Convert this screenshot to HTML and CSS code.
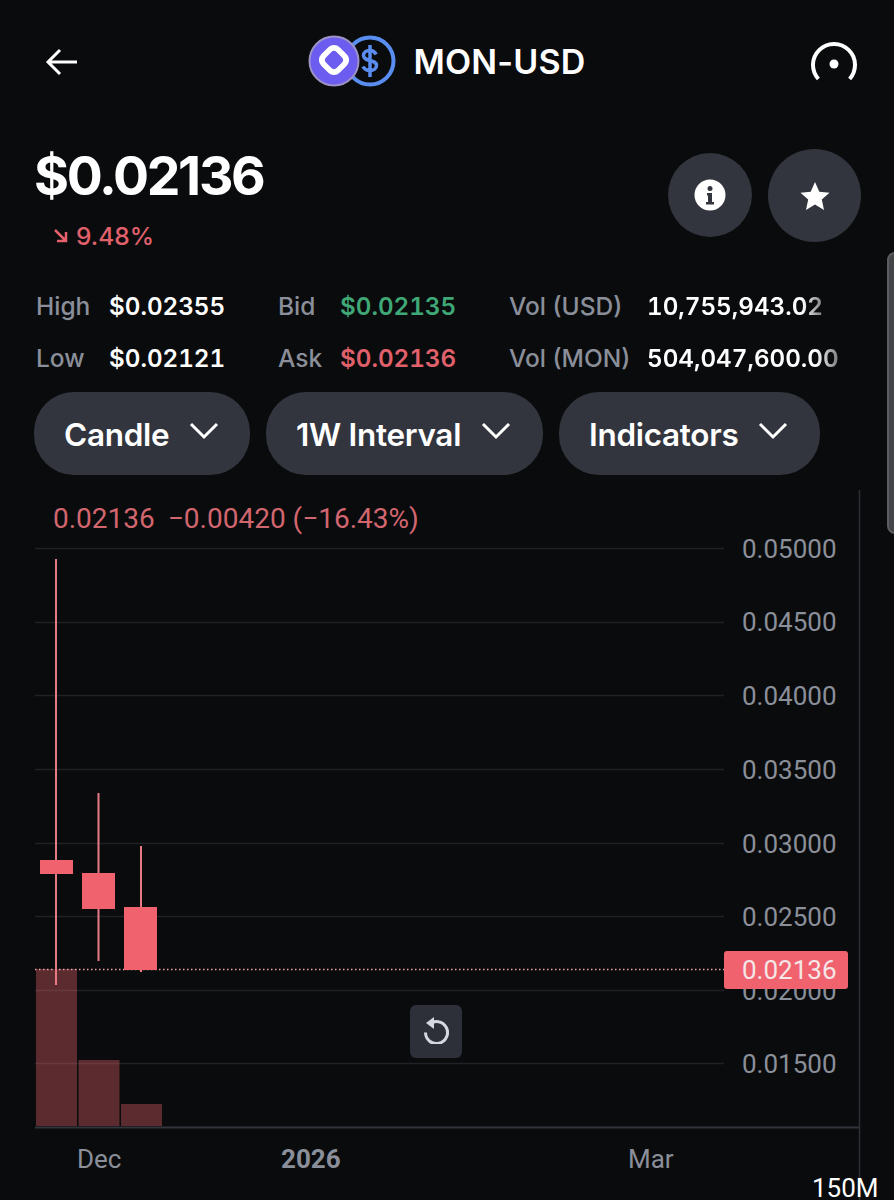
FILE: index.html
```html
<!DOCTYPE html>
<html lang="en">
<head>
    <meta charset="UTF-8">
    <title>MON-USD</title>
    <link rel="stylesheet" href="styles.css">
</head>
<body>
    <div class="page">
        <!--header-->
        <header class="top">
            <svg class="back" width="34" height="30" viewBox="0 0 34 30"><path d="M15 3 3 15l12 12M3 15h29" fill="none" stroke="#fff" stroke-width="3"/></svg>
            <div class="pair">
                <svg class="pair-logo" width="88" height="54" viewBox="0 0 88 54">
                    <circle cx="62" cy="26" r="23.500" fill="#0a0b0d" stroke="#5a8df0" stroke-width="4"/>
                    <path d="M68 19.500c-1-2.500-3.500-4-6.500-4-3.500 0-6 2-6 5 0 6.500 13 3.500 13 10 0 3-2.800 5-6.500 5-3.300 0-5.800-1.500-7-4M62 10v32" fill="none" stroke="#5a8df0" stroke-width="3.500"/>
                    <circle cx="26" cy="26" r="24.500" fill="#6c5cf0" stroke="#9d92c4" stroke-width="2"/>
                    <rect x="13" y="12" width="26" height="26" rx="8" fill="#fff" transform="rotate(45 26 25)"/>
                    <rect x="18.500" y="17.500" width="15" height="15" rx="4" fill="#6c5cf0" transform="rotate(45 26 25)"/>
                </svg>
                <span class="pair-name">MON-USD</span>
            </div>
            <svg class="gauge" width="50" height="40" viewBox="0 0 50 40"><path d="M9.350 37A21 21 0 1 1 40.650 37" fill="none" stroke="#fff" stroke-width="4"/><circle cx="25" cy="22" r="4.500" fill="#fff"/></svg>
        </header>

        <!--price-->
        <section class="summary">
            <div>
                <div class="price">$0.02136</div>
                <div class="change">
                    <svg width="16" height="16" viewBox="0 0 16 16"><path d="M2 2l11 11M13 4v9H4" fill="none" stroke="#e5616b" stroke-width="2.500"/></svg>
                    <span>9.48%</span>
                </div>
            </div>
            <div class="actions">
                <button class="round round-info">
                    <svg width="32" height="32" viewBox="0 0 32 32"><circle cx="16" cy="16" r="15.500" fill="#fff"/><circle cx="16" cy="9.500" r="2.500" fill="#32353d"/><path d="M13 14h5v9h2v2.500h-8V23h2v-6.500h-1Z" fill="#32353d"/></svg>
                </button>
                <button class="round round-star">
                    <svg width="30" height="28" viewBox="0 0 30 28"><path d="m15 0 4.300 9.700 10.200 1-7.700 6.900 2.200 10.400L15 22.600 6 28l2.200-10.400L.5 10.700l10.200-1Z" fill="#fff"/></svg>
                </button>
            </div>
        </section>

        <!--stats-->
        <section class="stats">
            <span class="label">High</span><span class="value">$0.02355</span>
            <span class="label">Bid</span><span class="value green">$0.02135</span>
            <span class="label">Vol (USD)</span><span class="value fade">10,755,943.02</span>
            <span class="label">Low</span><span class="value">$0.02121</span>
            <span class="label">Ask</span><span class="value red">$0.02136</span>
            <span class="label">Vol (MON)</span><span class="value fade">504,047,600.00</span>
        </section>

        <!--dropdowns-->
        <nav class="filters">
            <button class="pill pill-candle">Candle <svg width="30" height="18" viewBox="0 0 30 18"><path d="M2 2l13 13L28 2" fill="none" stroke="#fff" stroke-width="3"/></svg></button>
            <button class="pill pill-interval">1W Interval <svg width="30" height="18" viewBox="0 0 30 18"><path d="M2 2l13 13L28 2" fill="none" stroke="#fff" stroke-width="3"/></svg></button>
            <button class="pill pill-indicators">Indicators <svg width="30" height="18" viewBox="0 0 30 18"><path d="M2 2l13 13L28 2" fill="none" stroke="#fff" stroke-width="3"/></svg></button>
        </nav>

        <!--chart-->
        <section class="chart">
            <svg class="plot" width="894" height="710" viewBox="0 490 894 710">
                <g stroke="#1f2126" stroke-width="1.500">
                    <path d="M35 548.500H724M35 622.500H724M35 695.500H724M35 769.500H724M35 843.500H724M35 916.500H724M35 990.500H724M35 1063.500H724"/>
                </g>
                <path d="M859.500 490V1200" stroke="#2c2f36" stroke-width="1.500"/>
                <path d="M35 1127.500H859" stroke="#32353c" stroke-width="2"/>

                <g fill="#8a8f99" class="axis">
                    <text x="742" y="558">0.05000</text>
                    <text x="742" y="631">0.04500</text>
                    <text x="742" y="705">0.04000</text>
                    <text x="742" y="779">0.03500</text>
                    <text x="742" y="853">0.03000</text>
                    <text x="742" y="926">0.02500</text>
                    <text x="742" y="1000">0.02000</text>
                    <text x="742" y="1073">0.01500</text>
                </g>
                <g fill="#8a8f99" class="axis">
                    <text x="77" y="1168">Dec</text>
                    <text x="281" y="1168" class="axis-year">2026</text>
                    <text x="628" y="1168">Mar</text>
                </g>

                <g fill="#f4676f" fill-opacity=".35">
                    <rect x="36" y="969" width="41" height="157"/>
                    <rect x="78.500" y="1060" width="41" height="66"/>
                    <rect x="121" y="1104" width="41" height="22"/>
                </g>
                <path d="M35 969.500H724" stroke="#f2a3aa" stroke-width="1.500" stroke-dasharray="1.500 2.500"/>
                <g fill="#f1626f">
                    <rect x="55" y="559" width="2" height="426" fill="#e77a83"/>
                    <rect x="97.500" y="793" width="2" height="168" fill="#e77a83"/>
                    <rect x="140" y="846" width="2" height="126" fill="#e77a83"/>
                    <rect x="40" y="860" width="33" height="14"/>
                    <rect x="82" y="873" width="33" height="36"/>
                    <rect x="124" y="907" width="33" height="63"/>
                </g>

                <rect x="724" y="951" width="124" height="38" rx="3" fill="#f1626f"/>
                <text x="742" y="979" fill="#f5e6e8" class="axis">0.02136</text>

                <text x="812" y="1197" fill="#fff" class="axis">150M</text>
            </svg>

            <div class="legend">
                <span>0.02136</span>
                <span>&minus;0.00420 (&minus;16.43%)</span>
            </div>

            <button class="reset">
                <svg width="26" height="28" viewBox="0 0 26 28"><path d="M6 8.500a11 11 0 1 1-3.500 8" fill="none" stroke="#d5d8df" stroke-width="3"/><path d="M11 1v12L3 7Z" fill="#d5d8df"/></svg>
            </button>
        </section>

        <div class="scroll-thumb"></div>
    </div>
</body>
</html>
```

FILE: styles.css
```css
/*reset*/
body, button {
    margin: 0;
    padding: 0;
}
button {
    border: 0;
    font: inherit;
    color: inherit;
}
svg {
    display: block;
}

/*page*/
body {
    background-color: #0a0b0d;
    color: #fff;
    font-family: "Inter", "Liberation Sans", sans-serif;
}
.page {
    position: relative;
    width: 894px;
    height: 1200px;
    overflow: hidden;
}

/*header*/
.top {
    display: flex;
    align-items: center;
    justify-content: space-between;
    height: 54px;
    padding: 35px 35px 0 45px;
}
.pair {
    display: flex;
    align-items: center;
    gap: 17px;
    margin-left: 6px;
}
.pair-name {
    margin-top: -1px;
    font-size: 34px;
    font-weight: 600;
    letter-spacing: 0.2px;
}

/*price*/
.summary {
    display: flex;
    justify-content: space-between;
    height: 101px;
    margin-top: 60px;
    padding: 0 33px 0 34px;
}
.price {
    margin-top: -4px;
    font-size: 53.500px;
    line-height: 62px;
    font-weight: 700;
    letter-spacing: -2.300px;
}
.change {
    display: flex;
    align-items: center;
    gap: 7px;
    margin: 14px 0 0 19px;
    color: #e0616b;
    font-size: 24.500px;
    line-height: 30px;
    font-weight: 500;
}
.actions {
    display: flex;
    align-items: flex-start;
    gap: 16px;
}
.round {
    display: flex;
    align-items: center;
    justify-content: center;
    background-color: #32353d;
    border-radius: 50%;
}
.round-info {
    width: 84px;
    height: 84px;
    margin-top: 4px;
}
.round-star {
    width: 93px;
    height: 93px;
}

/*stats*/
.stats {
    display: grid;
    grid-template-columns: 74px 168px 63px 168px 139px auto;
    grid-auto-rows: 52px;
    align-items: center;
    height: 104px;
    margin-top: 30px;
    padding-left: 36px;
    font-size: 24.500px;
    font-weight: 500;
    white-space: nowrap;
}
.stats .label {
    color: #8a8f99;
}
.stats .value {
    margin-left: -1px;
    font-size: 24.200px;
    font-weight: 600;
    font-variant-numeric: tabular-nums;
}
.stats .green {
    color: #3fa876;
}
.stats .red {
    color: #e0616b;
}
.stats .fade {
    justify-self: start;
    -webkit-mask-image: linear-gradient(90deg, #000 88%, rgba(0,0,0,.45));
    mask-image: linear-gradient(90deg, #000 88%, rgba(0,0,0,.45));
}

/*dropdowns*/
.filters {
    display: flex;
    gap: 16px;
    margin-top: 8px;
    padding-left: 34px;
}
.pill {
    display: flex;
    align-items: center;
    gap: 20px;
    height: 83px;
    padding: 2px 0 0 30px;
    background-color: #32353d;
    border-radius: 40px;
    font-size: 31.500px;
    font-weight: 600;
    letter-spacing: -0.3px;
}
.pill svg {
    margin-top: -8px;
}
.pill-candle {
    width: 216px;
}
.pill-interval {
    width: 277px;
}
.pill-indicators {
    width: 261px;
}

/*chart*/
.chart {
    position: absolute;
    left: 0;
    top: 490px;
    width: 894px;
    height: 710px;
}
.plot {
    position: absolute;
    left: 0;
    top: 0;
}
.axis {
    font-family: "Roboto", "Liberation Sans", sans-serif;
    font-size: 26px;
}
.axis-year {
    font-weight: 700;
}
.legend {
    position: absolute;
    left: 53px;
    top: 13px;
    display: flex;
    gap: 13px;
    color: #d2666f;
    font-family: "Roboto", "Liberation Sans", sans-serif;
    font-size: 28px;
    line-height: 32px;
}
.reset {
    position: absolute;
    left: 410px;
    top: 515px;
    display: flex;
    align-items: center;
    justify-content: center;
    width: 52px;
    height: 53px;
    padding-bottom: 4px;
    background-color: #2d3039;
    border-radius: 6px;
}

/*scrollbar edge*/
.scroll-thumb {
    position: absolute;
    left: 887px;
    top: 252px;
    width: 20px;
    height: 278px;
    background-color: #444548;
    border: 2px solid #5c5d60;
    border-radius: 8px;
}
```
